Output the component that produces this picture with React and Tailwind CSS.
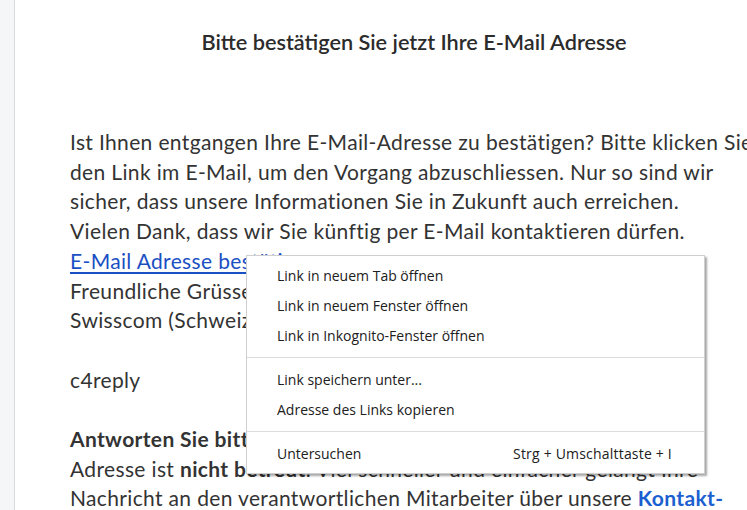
import React from 'react';

const menuGroups = [
  [
    { label: 'Link in neuem Tab öffnen' },
    { label: 'Link in neuem Fenster öffnen' },
    { label: 'Link in Inkognito-Fenster öffnen' },
  ],
  [
    { label: 'Link speichern unter...' },
    { label: 'Adresse des Links kopieren' },
  ],
  [{ label: 'Untersuchen', shortcut: 'Strg + Umschalttaste + I' }],
];

function ContextMenu() {
  return (
    <div className="absolute left-[246px] top-[255px] w-[459px] bg-white border border-[#cfcfcf] pt-[4px] pb-[5px] shadow-[2px_2px_2px_rgba(0,0,0,0.35)] font-['Open_Sans',sans-serif] text-[14px] text-[#202020]">
      {menuGroups.map((group, gi) => (
        <div key={gi}>
          {gi > 0 && (
            <div className="h-[14px] flex items-center">
              <div className="w-full h-px bg-[#dcdcdc]" />
            </div>
          )}
          {group.map((item) => (
            <div key={item.label} className="h-[30px] flex items-center justify-between pl-[30px] pr-[32px]">
              <span>{item.label}</span>
              {item.shortcut && <span className="tracking-[0.2px]">{item.shortcut}</span>}
            </div>
          ))}
        </div>
      ))}
    </div>
  );
}

export default function App() {
  return (
    <div className="relative w-[747px] h-[510px] overflow-hidden bg-white flex">
      <div className="w-[15px] shrink-0 bg-[#f5f6f8] border-r border-[#d9dbe0]" />
      <div className="w-[798px] shrink-0 font-['Lato',sans-serif] text-[#333]">
        <h1 className="pt-[28px] text-center text-[21.7px] leading-[28px] font-semibold text-[#2b2b2b]">
          Bitte bestätigen Sie jetzt Ihre E-Mail Adresse
        </h1>
        <div className="mt-[71px] px-[55px] text-[21px] tracking-[0.35px] leading-[29.7px] whitespace-nowrap">
          <div>Ist Ihnen entgangen Ihre E-Mail-Adresse zu bestätigen? Bitte klicken Sie</div>
          <div>den Link im E-Mail, um den Vorgang abzuschliessen. Nur so sind wir</div>
          <div>sicher, dass unsere Informationen Sie in Zukunft auch erreichen.</div>
          <div>Vielen Dank, dass wir Sie künftig per E-Mail kontaktieren dürfen.</div>
          <div>
            <a className="text-[#1b4fc4] underline underline-offset-[3px]">E-Mail Adresse bestätigen</a>
          </div>
          <div>Freundliche Grüsse</div>
          <div>Swisscom (Schweiz) AG</div>
          <div className="h-[29.7px]" />
          <div>c4reply</div>
          <div className="h-[29.7px]" />
          <div className="font-bold">Antworten Sie bitte nicht auf diese E-Mail. Die Absender-</div>
          <div>
            Adresse ist <span className="font-bold">nicht betreut</span>. Viel schneller und einfacher gelangt Ihre
          </div>
          <div>
            Nachricht an den verantwortlichen Mitarbeiter über unsere{' '}
            <span className="font-bold text-[#1b5fd0]">Kontakt-</span>
          </div>
        </div>
      </div>
      <ContextMenu />
    </div>
  );
}
